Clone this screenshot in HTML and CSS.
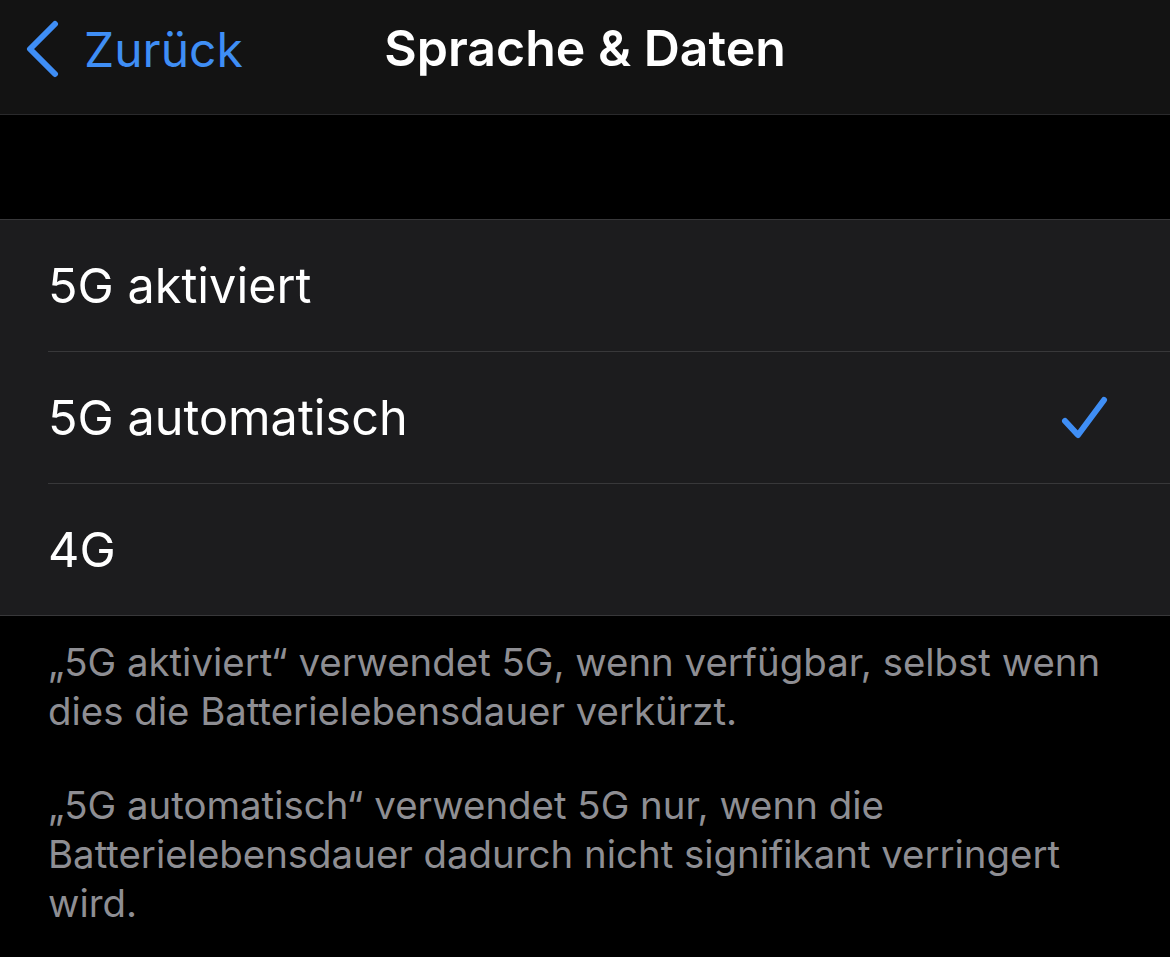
FILE: index.html
```html
<!DOCTYPE html>
<html lang="de">
<head>
<meta charset="UTF-8">
<meta name="viewport" content="width=device-width, initial-scale=1.0">
<title>Sprache &amp; Daten</title>
<link rel="stylesheet" href="styles.css">
</head>
<body>
<div class="navbar">
    <a class="back" href="#">
        <svg class="chevron" width="36" height="58" viewBox="0 0 36 58">
            <path d="M31 4 L6 29 L31 54" fill="none" stroke="#3f8ef5" stroke-width="6" stroke-linecap="round" stroke-linejoin="round"/>
        </svg>
        <span>Zurück</span>
    </a>
    <h1 class="title">Sprache &amp; Daten</h1>
</div>

<div class="spacer"></div>

<ul class="list">
    <li class="row"><span>5G aktiviert</span></li>
    <li class="row"><span>5G automatisch</span>
        <svg class="check" width="50" height="48" viewBox="0 0 50 48">
            <path d="M5 27 L18 41 L44 6" fill="none" stroke="#3f8ef5" stroke-width="6" stroke-linecap="round" stroke-linejoin="round"/>
        </svg>
    </li>
    <li class="row"><span>4G</span></li>
</ul>

<div class="footer">
    <p>„5G aktiviert“ verwendet 5G, wenn verfügbar, selbst wenn dies die Batterielebensdauer verkürzt.</p>
    <p>„5G automatisch“ verwendet 5G nur, wenn die Batterielebensdauer dadurch nicht signifikant verringert wird.</p>
</div>
</body>
</html>
```

FILE: styles.css
```css
body {
    margin: 0;
    padding: 0;
    background-color: #000;
    font-family: Inter, "Noto Sans", sans-serif;
    color: #fff;
    width: 1170px;
    height: 957px;
    overflow: hidden;
}
.navbar {
    position: relative;
    height: 114px;
    background-color: #131313;
    border-bottom: 1px solid #2a2a2c;
    display: flex;
    align-items: center;
    justify-content: center;
}
.back {
    position: absolute;
    left: 24px;
    top: 20px;
    display: flex;
    align-items: center;
    gap: 24px;
    color: #3f8ef5;
    text-decoration: none;
    font-size: 48px;
    height: 58px;
}
.title {
    margin: 0;
    font-size: 50px;
    font-weight: 600;
    margin-top: -18px;
}
.spacer {
    height: 104px;
}
.list {
    list-style: none;
    margin: 0;
    padding: 0 0 0 48px;
    background-color: #1c1c1e;
    border-top: 1px solid #38383a;
    border-bottom: 1px solid #38383a;
}
.row {
    height: 131px;
    display: flex;
    align-items: center;
    justify-content: space-between;
    padding-right: 60px;
    font-size: 48.6px;
    border-bottom: 1px solid #38383a;
}
.row:last-child {
    border-bottom: none;
}
.footer {
    padding: 22px 60px 0 48px;
    color: #8e8e93;
    font-size: 38.4px;
    line-height: 49px;
}
.footer p {
    margin: 0 0 45px;
}
```
